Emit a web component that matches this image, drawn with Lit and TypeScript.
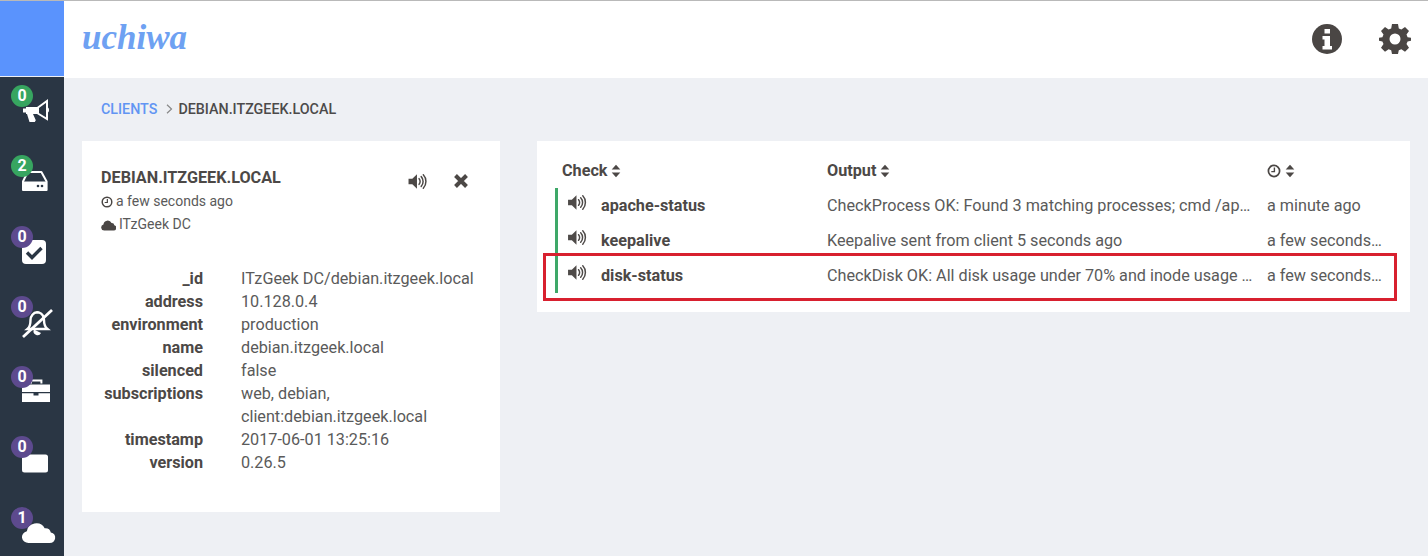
import { LitElement, html, css, svg } from "lit";
import { customElement } from "lit/decorators.js";

const volume = svg`<path d="M1 6.500h3.600L9 2.200v13.600L4.600 11.500H1z" fill="currentColor"/><path d="M11 6.300c1.300 1.400 1.300 4 0 5.400M13 4.400c2.400 2.400 2.400 6.800 0 9.200M15 2.600c3.300 3.400 3.300 9.400 0 12.800" fill="none" stroke="currentColor" stroke-width="1.400" stroke-linecap="round"/>`;
const clockIcon = html`<svg class="clock" viewBox="0 0 14 14"><circle cx="7" cy="7" r="5.600" fill="none" stroke="currentColor" stroke-width="1.700"/><path d="M7.400 3.600v4H4.300" fill="none" stroke="currentColor" stroke-width="1.400"/></svg>`;
const sortIcon = html`<svg class="sort" viewBox="0 0 10 14"><path d="M5 .8 9.300 5.600H.7zM5 13.200.7 8.400h8.600z" fill="currentColor"/></svg>`;
const cloudPath = "M6 23a6 6 0 0 1-1.600-11.800A8.500 8.500 0 0 1 20.600 8.200a5.200 5.200 0 0 1 5.600 4.200A5.400 5.400 0 0 1 25 23z";

const navIcons = [
  svg`<path d="M4 9h12v7H11l2.800 6.200-1 1.800H7.500L5 16H4z" fill="#fff"/><path d="M1 10.500h4v4H1z" fill="#fff"/><path d="M16 9.500 25 3v18l-9-5.500z" fill="none" stroke="#fff" stroke-width="2"/><path d="M26 9.500c1.400.8 1.400 4.200 0 5z" fill="#fff"/>`,
  svg`<path d="M5.600 4h13.800l5.200 9.500V22H1v-8.500z" fill="none" stroke="#fff" stroke-width="2" stroke-linejoin="round"/><path d="M1 13.500h23.600V22H1z" fill="#fff"/><circle cx="16" cy="18" r="1.300" fill="#2a3644"/><circle cx="20" cy="18" r="1.300" fill="#2a3644"/>`,
  svg`<rect x="0" y="1" width="24" height="24" rx="4" fill="#fff"/><path d="m5 13.500 5 5 9.500-9.500" fill="none" stroke="#2a3644" stroke-width="3.400"/>`,
  svg`<path d="M17 3.500c3.200 1.200 5 4 5 7.500 0 4.500 1 7 3.500 9H5.500c2.500-2 3-5 3-9 0-4 3-7.600 6.500-7.800z" fill="none" stroke="#fff" stroke-width="2.400"/><path d="M12 20.500a3.600 3.600 0 0 0 7 3.500z" fill="#fff"/><path d="M1 28 30 1" stroke="#fff" stroke-width="2.800"/>`,
  svg`<path d="M9 4.500V1.600h10.400v2.900" fill="none" stroke="#fff" stroke-width="2"/><path d="M0 5.500h28v7.500H0zM0 14.200h11.500v2.300h5v-2.300H28V23H0z" fill="#fff"/>`,
  svg`<rect x="0" y="5.500" width="26" height="18" rx="2.500" fill="#fff"/>`,
  svg`<path d="${cloudPath}" fill="#fff" transform="scale(1.1 1)"/>`,
];

const navItems = [
  { n: 0, c: "green", i: 0 },
  { n: 2, c: "green", i: 1 },
  { n: 0, c: "purple", i: 2 },
  { n: 0, c: "purple", i: 3 },
  { n: 0, c: "purple", i: 4 },
  { n: 0, c: "purple", i: 5 },
  { n: 1, c: "purple", i: 6 },
];

const details: [string, string[]][] = [
  ["_id", ["ITzGeek DC/debian.itzgeek.local"]],
  ["address", ["10.128.0.4"]],
  ["environment", ["production"]],
  ["name", ["debian.itzgeek.local"]],
  ["silenced", ["false"]],
  ["subscriptions", ["web, debian,", "client:debian.itzgeek.local"]],
  ["timestamp", ["2017-06-01 13:25:16"]],
  ["version", ["0.26.5"]],
];

const checks = [
  ["apache-status", "CheckProcess OK: Found 3 matching processes; cmd /apache2/", "a minute ago"],
  ["keepalive", "Keepalive sent from client 5 seconds ago", "a few seconds ago"],
  ["disk-status", "CheckDisk OK: All disk usage under 70% and inode usage under 60%", "a few seconds ago"],
];

@customElement("app-root")
export class AppRoot extends LitElement {
  static styles = css`
    :host {
      display: block;
      width: 1428px;
      height: 556px;
      overflow: hidden;
      background: #eef0f4;
      font-family: Roboto, "Liberation Sans", sans-serif;
      font-size: 16.2px;
      color: #555;
    }
    .frame { display: grid; grid-template-columns: 64px 1fr; grid-template-rows: 77px 1fr; height: 556px; border-top: 1px solid #b9b9b9; box-sizing: border-box; }
    .brand { background: #5a93fd; height: 75px; grid-row: 1; }
    .top { background: #fff; display: flex; align-items: center; padding: 0 17px 0 18px; }
    .logo { font-family: "Liberation Serif", serif; font-style: italic; font-weight: 700; font-size: 35px; color: #6ea1f2; line-height: 1; margin-top: -4px; }
    .actions { margin-left: auto; display: flex; gap: 36px; color: #4a4644; margin-top: -1px; }
    .actions svg { width: 32px; height: 32px; display: block; }
    .side { background: #2a3644; grid-row: 2; display: flex; flex-direction: column; margin-top: -1px; }
    .item { position: relative; height: 70.3px; flex: none; padding: 21px 0 0 22px; box-sizing: border-box; }
    .item svg { width: 32px; height: 32px; display: block; overflow: visible; }
    .badge { position: absolute; left: 11px; top: 8px; width: 22px; height: 22px; border-radius: 50%; color: #fff; font-weight: 700; font-size: 16px; line-height: 22px; text-align: center; }
    .green { background: #37a560; }
    .purple { background: #5d4a8e; }
    .main { padding: 0 18px; }
    .crumb { display: flex; align-items: center; height: 63px; box-sizing: border-box; padding: 0 0 1px 19px; font-size: 14.3px; font-weight: 500; color: #4c4a4a; text-transform: uppercase; }
    .crumb a { color: #6195f3; }
    .sep { width: 7px; height: 10px; margin: 0 5px 0 9px; }
    .cols { display: flex; align-items: flex-start; gap: 37px; }
    .client { width: 418px; height: 371px; background: #fff; box-sizing: border-box; padding: 28px 19px 0; flex: none; }
    .client-head { display: flex; }
    .client-title { flex: 1; margin-top: -3px; }
    .client h2 { margin: 0 0 1px; font-size: 16.2px; font-weight: 700; line-height: 23px; color: #4c4846; }
    .meta { display: flex; align-items: center; gap: 3px; line-height: 23px; font-size: 14px; color: #5a5a5a; }
    .meta .clock { width: 12px; height: 14px; }
    .clock { width: 13px; height: 13px; flex: none; color: #4a4644; }
    .cloudm { width: 15px; height: 12px; color: #4a4644; flex: none; }
    .tools { display: flex; gap: 25px; color: #4c4846; margin: 3px 12px 0 0; }
    .tools svg { width: 21px; height: 19px; display: block; }
    .tools svg.x { width: 16px; height: 16px; margin-top: 1px; }
    .kv { display: grid; grid-template-columns: 122px 1fr; column-gap: 38px; margin: 31px 0 0 -20px; line-height: 23px; }
    .kv b { text-align: right; font-weight: 700; color: #4c4846; }
    .kv span { display: block; color: #5a5a5a; white-space: nowrap; }
    .checks { width: 873px; height: 171px; background: #fff; flex: none; box-sizing: border-box; padding: 12px 0 0 18px; position: relative; }
    .grid { display: grid; grid-template-columns: 272px 440px 118px; }
    .hd { font-weight: 700; height: 35px; display: flex; align-items: center; gap: 4px; color: #4c4846; }
    .hd .clock { width: 14px; height: 14px; }
    .sort { width: 10px; height: 14px; color: #4c4846; flex: none; }
    .hd.first { padding-left: 7px; }
    .name, .out-t, .age { height: 35px; display: flex; align-items: center; }
    .name { border-left: 3px solid #3ea868; padding-left: 9px; font-weight: 700; color: #4c4846; box-sizing: border-box; }
    .name svg { width: 20px; height: 19px; margin: -6px 14px 0 0; color: #4e4a48; flex: none; }
    .out-t span, .age span { display: block; overflow: hidden; text-overflow: ellipsis; white-space: nowrap; width: 100%; }
    .out-t { padding-right: 12px; box-sizing: border-box; color: #5a5a5a; }
    .age { color: #5a5a5a; }
    .mark { position: absolute; left: 6px; top: 112px; width: 854px; height: 48px; box-sizing: border-box; border: 3px solid #d8202f; pointer-events: none; }
  `;

  render() {
    return html`<div class="frame">
      <div class="brand"></div>
      <header class="top">
        <div class="logo">uchiwa</div>
        <div class="actions">
          <svg viewBox="0 0 32 32"><circle cx="16" cy="16" r="15" fill="currentColor"/><path d="M13.500 6h5.500v4.500h-5.500zM11.500 13h7.500v10h2v3.500H11.500V23h2v-6.500h-2z" fill="#fff"/></svg>
          <svg viewBox="0 0 32 32"><path fill-rule="evenodd" d="M13 1h6l.8 4.400 2.600 1.100L26 4l4 4-2.500 3.600 1.100 2.600L33 15v0 2.500l-4.400 1-1.100 2.600L30 24.700l-4 4-3.600-2.500-2.600 1.100L19 31h-6l-.8-3.700-2.600-1.100L6 28.700l-4-4 2.500-3.600-1.100-2.600L-1 17.500V15l4.400-.8 1.100-2.600L2 8l4-4 3.600 2.500 2.600-1.100zM16 10.500a5.500 5.500 0 1 0 0 11 5.500 5.500 0 0 0 0-11z" fill="currentColor"/></svg>
        </div>
      </header>
      <nav class="side">
        ${navItems.map(
          (it) => html`<div class="item">
            <svg viewBox="0 0 32 32">${navIcons[it.i]}</svg>
            <div class="badge ${it.c}">${it.n}</div>
          </div>`
        )}
      </nav>
      <main class="main">
        <div class="crumb">
          <a>Clients</a>
          <svg class="sep" viewBox="0 0 7 10"><path d="m1 .8 4.500 4.200L1 9.200" fill="none" stroke="#888" stroke-width="1.200"/></svg>
          <span>debian.itzgeek.local</span>
        </div>
        <div class="cols">
          <section class="client">
            <div class="client-head">
              <div class="client-title">
                <h2>DEBIAN.ITZGEEK.LOCAL</h2>
                <div class="meta">${clockIcon}a few seconds ago</div>
                <div class="meta"><svg class="cloudm" viewBox="0 0 29 24"><path d="${cloudPath}" fill="currentColor"/></svg>ITzGeek DC</div>
              </div>
              <div class="tools">
                <svg viewBox="0 0 19 18">${volume}</svg>
                <svg class="x" viewBox="0 0 16 16"><path d="M2.500 2.500l11 11M13.500 2.500l-11 11" stroke="currentColor" stroke-width="4"/></svg>
              </div>
            </div>
            <div class="kv">
              ${details.map(([k, v]) => html`<b>${k}</b><div>${v.map((l) => html`<span>${l}</span>`)}</div>`)}
            </div>
          </section>
          <section class="checks">
            <div class="grid">
              <div class="hd first">Check ${sortIcon}</div>
              <div class="hd">Output ${sortIcon}</div>
              <div class="hd">${clockIcon}${sortIcon}</div>
              ${checks.map(
                ([n, o, a]) => html`
                  <div class="name"><svg viewBox="0 0 19 18">${volume}</svg>${n}</div>
                  <div class="out-t"><span>${o}</span></div>
                  <div class="age"><span>${a}</span></div>`
              )}
            </div>
            <div class="mark"></div>
          </section>
        </div>
      </main>
    </div>`;
  }
}
